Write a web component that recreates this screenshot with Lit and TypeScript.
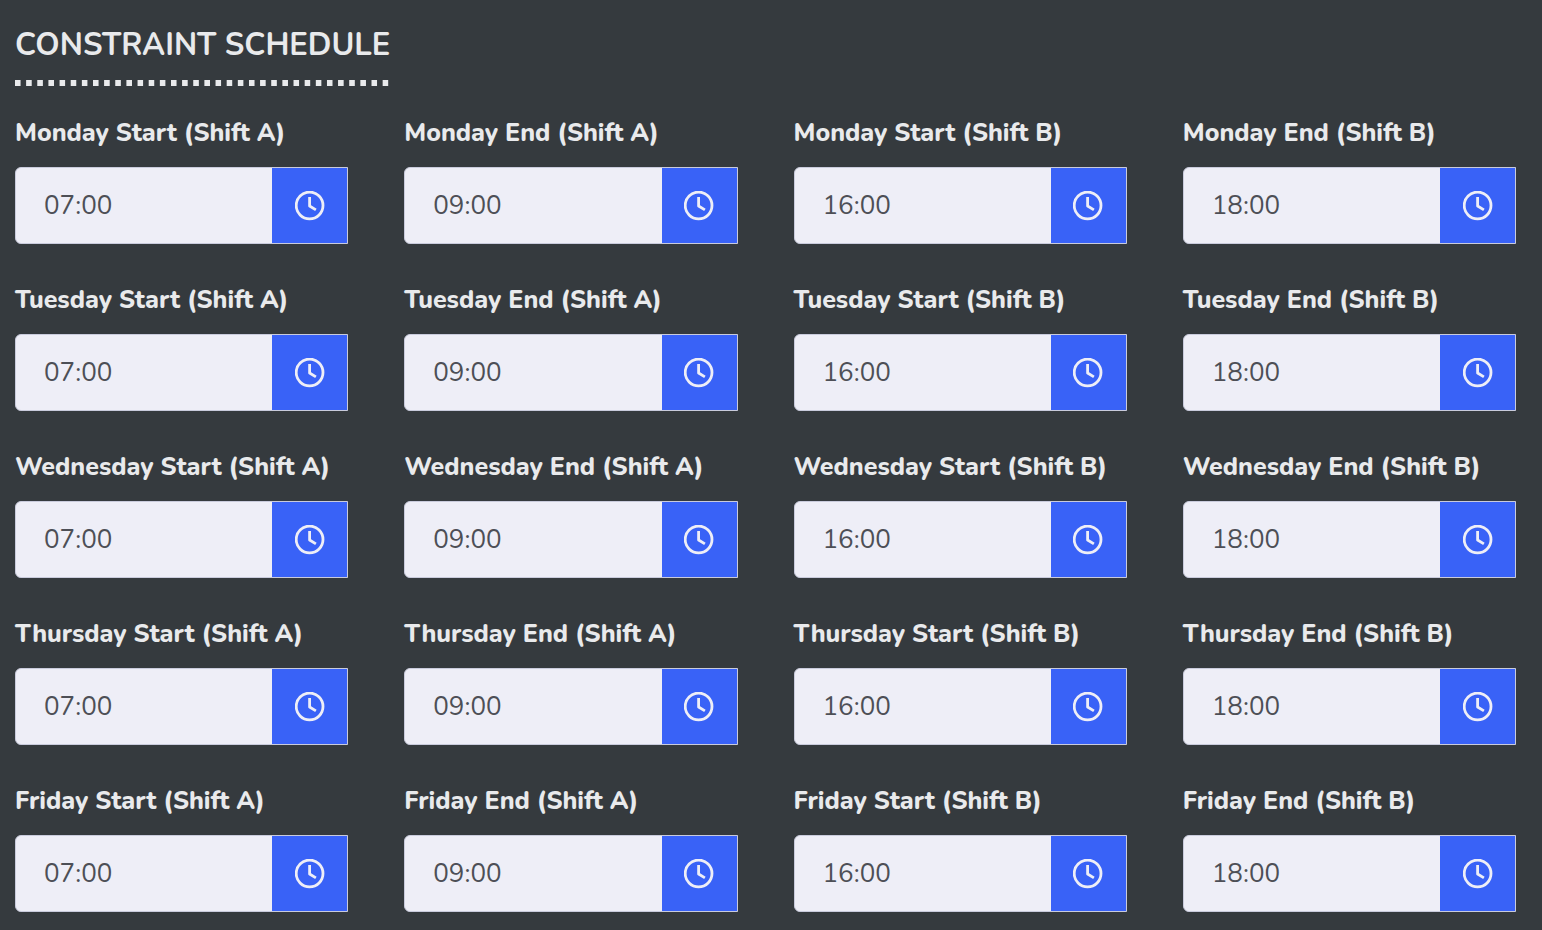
import { LitElement, html, css } from "lit";
import { customElement, property } from "lit/decorators.js";

const DAYS = ["Monday", "Tuesday", "Wednesday", "Thursday", "Friday"];
const SLOTS = [
  { edge: "Start", shift: "A", time: "07:00" },
  { edge: "End", shift: "A", time: "09:00" },
  { edge: "Start", shift: "B", time: "16:00" },
  { edge: "End", shift: "B", time: "18:00" },
];

@customElement("time-field")
class TimeField extends LitElement {
  @property() label = "";
  @property() value = "";

  static styles = css`
    :host {
      display: block;
      min-width: 0;
    }
    .label {
      display: block;
      font-size: 25px;
      font-weight: 800;
      line-height: 32px;
      margin-bottom: 18px;
      white-space: nowrap;
    }
    .group {
      display: flex;
      height: 77px;
      box-sizing: border-box;
      border: 1px solid #c9cbdc;
      border-radius: 6px 0 0 6px;
      background: #eeeef7;
      overflow: hidden;
    }
    .input {
      flex: 1;
      min-width: 0;
      border: 0;
      outline: 0;
      padding: 0 28px;
      background: transparent;
      color: #4d4f56;
      font: inherit;
      font-size: 26px;
      font-weight: 400;
    }
    .button {
      flex: none;
      width: 75px;
      border: 0;
      padding: 0;
      display: grid;
      place-items: center;
      background: #3962f7;
      color: #eeeef7;
      cursor: pointer;
    }
    .icon {
      width: 30px;
      height: 30px;
      display: block;
    }
  `;

  render() {
    return html`
      <label class="label" for="time">${this.label}</label>
      <div class="group">
        <input class="input" id="time" type="text" .value=${this.value} />
        <button class="button" type="button" aria-label="Pick a time">
          <svg class="icon" viewBox="0 0 30 30" fill="none" stroke="currentColor" stroke-width="2.8">
            <circle cx="14.6" cy="14.5" r="13.4" />
            <path d="M14.6 6V15L20.9 18.9" stroke-linejoin="round" />
          </svg>
        </button>
      </div>
    `;
  }
}

@customElement("app-root")
class AppRoot extends LitElement {
  static styles = css`
    :host {
      display: block;
      box-sizing: border-box;
      min-height: 100vh;
      padding: 25px 26px 18px 15px;
      background: #353a3e;
      color: #e9eaec;
      font-family: Nunito, "Open Sans", sans-serif;
    }
    .title {
      width: fit-content;
      margin: 0 0 31px;
      font-size: 31px;
      font-weight: 700;
      line-height: 40px;
      white-space: nowrap;
    }
    .title::after {
      content: "";
      display: block;
      height: 6px;
      margin: 15px -4px 0 0;
      background: linear-gradient(90deg, #e9eaec 50%, transparent 50%) 0 0 / 11px 6px round;
      clip-path: inset(0 4px 0 0);
    }
    .schedule {
      display: grid;
      grid-template-columns: repeat(4, minmax(0, 1fr));
      gap: 40px 56px;
    }
  `;

  render() {
    return html`
      <h1 class="title">CONSTRAINT SCHEDULE</h1>
      <div class="schedule">
        ${DAYS.map((day) =>
          SLOTS.map(
            (s) => html`<time-field
              .label=${`${day} ${s.edge} (Shift ${s.shift})`}
              .value=${s.time}
            ></time-field>`
          )
        )}
      </div>
    `;
  }
}
